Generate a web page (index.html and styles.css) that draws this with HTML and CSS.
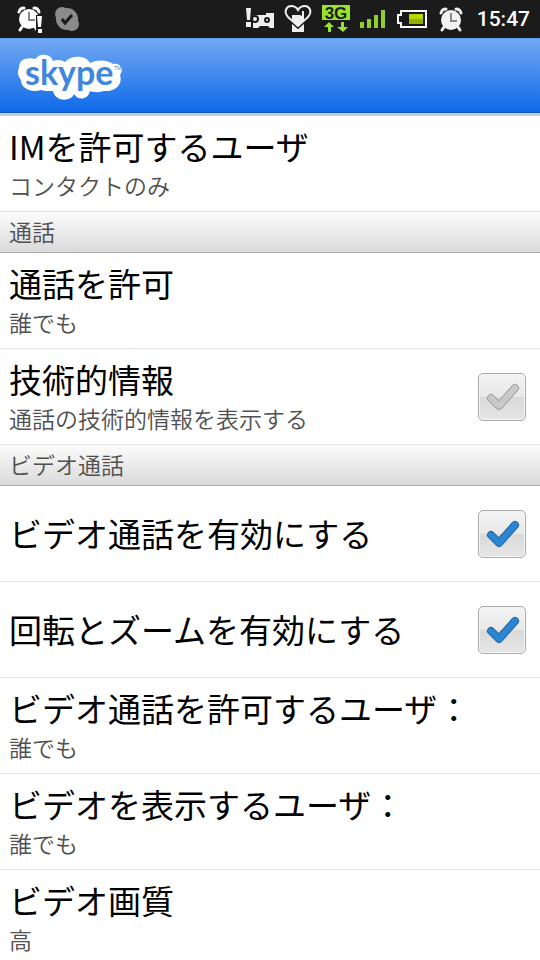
FILE: index.html
```html
<!DOCTYPE html>
<html lang="ja">
<head>
<meta charset="utf-8">
<meta name="viewport" content="width=device-width, initial-scale=1">
<title>Skype</title>
<link rel="stylesheet" href="styles.css">
</head>
<body>
<div class="status">
  <svg class="icon" width="26" height="28" viewBox="0 0 26 28" aria-hidden="true">
    <g fill="none" stroke="#fff" stroke-width="3" stroke-linecap="round"><path d="M2 7Q3 3 7 3M17 3Q21 3 22 7M5 22l-2 3M18 22l2 3"/></g>
    <circle cx="12" cy="14" r="10" fill="#fff"/>
    <path d="M12 7v8h6" fill="none" stroke="#888" stroke-width="2"/>
    <path d="M19 10h7v18h-7z" fill="#1b1b1b"/>
    <path d="M20 11h5l-1 11h-3zM21 24h4v4h-4z" fill="#fff"/>
  </svg>
  <svg class="icon" width="26" height="26" viewBox="0 0 26 26" aria-hidden="true">
    <g fill="#8b8b8b"><circle cx="14" cy="13" r="11"/><circle cx="9" cy="8" r="7"/><circle cx="19" cy="18" r="7"/></g>
    <path d="M9 13l3 4 7-8" fill="none" stroke="#1b1b1b" stroke-width="3"/>
  </svg>
  <span class="spacer"></span>
  <svg class="icon" width="28" height="24" viewBox="0 0 28 24" aria-hidden="true">
    <path d="M0 1h5l-1 12H1zM0 15h5v5H0z" fill="#eee"/>
    <path d="M7 8h13V6h8v15h-4l-2-2h-8l-2 2H7z" fill="#eee"/>
    <circle cx="9" cy="12" r="3" fill="#eee" stroke="#1b1b1b" stroke-width="2"/>
    <circle cx="21" cy="13" r="2" fill="#eee" stroke="#1b1b1b" stroke-width="2"/>
  </svg>
  <svg class="icon" width="28" height="28" viewBox="0 0 28 28" aria-hidden="true">
    <path d="M8 17h12v10H8z" fill="#eee"/>
    <path d="M14 21L4 12C-1 6 3 1 7 1q5 0 7 4 2-4 7-4c4 0 8 5 3 11z" fill="#1b1b1b" stroke="#1b1b1b" stroke-width="5"/>
    <path d="M14 21L4 12C-1 6 3 1 7 1q5 0 7 4 2-4 7-4c4 0 8 5 3 11z" fill="none" stroke="#eee" stroke-width="2"/>
    <path d="M8 10h8l2 1V6h2v9l-6 6-6-6z" fill="#eee"/>
  </svg>
  <svg class="icon" width="28" height="28" viewBox="0 0 28 28" role="img" aria-label="3G">
    <path d="M0 0h28v15H0z" fill="#9be22d"/>
    <text x="14" y="14" text-anchor="middle" class="net">3G</text>
    <path d="M7 17l5 5H9v5H6v-5H2zM19 17h3v5h4l-5 5-6-5h4z" fill="#9be22d"/>
  </svg>
  <svg class="icon" width="26" height="20" viewBox="0 0 26 20" aria-hidden="true">
    <path d="M0 13h4v6H0zM7 10h4v9H7zM14 6h4v13h-4zM21 1h4v18h-4z" fill="#8fcf27"/>
  </svg>
  <svg class="icon" width="32" height="20" viewBox="0 0 32 20" aria-hidden="true">
    <path d="M5 2h25v16H5v-4H2V6h3z" fill="none" stroke="#fff" stroke-width="2"/>
    <path d="M13 5h14v5H13z" fill="#b4d900"/><path d="M13 10h14v5H13z" fill="#8fb000"/>
  </svg>
  <svg class="icon" width="26" height="26" viewBox="0 0 26 26" aria-hidden="true">
    <g fill="none" stroke="#eee" stroke-width="3" stroke-linecap="round"><path d="M3 7Q4 3 8 3M18 3Q22 3 23 7M6 21l-2 3M20 21l2 3"/></g>
    <circle cx="13" cy="14" r="10" fill="#f2f2f2"/>
    <path d="M13 7v8h6" fill="none" stroke="#888" stroke-width="2"/>
  </svg>
  <time class="clock">15:47</time>
</div>

<header class="header">
  <svg class="logo" width="108" height="56" viewBox="0 0 108 56" role="img" aria-label="skype">
    <path fill="#fff" d="M2 19C2 10 10 8 19 10C21 4 34 4 36 12C41 10 45 11 48 13C54 6 69 6 73 14C81 10 91 11 96 15C104 13 107 21 103 26C106 35 99 43 87 42C80 44 76 43 73 42C71 51 61 52 57 45C54 53 38 53 36 42C30 42 27 42 24 41C13 44 4 39 4 31C1 27 0 23 2 19Z"/>
    <text x="8" y="36" class="wordmark">skype</text>
    <text x="97" y="21" class="tm">TM</text>
  </svg>
</header>

<main>
  <section>
    <div class="row"><div class="text"><span class="title">IMを許可するユーザ</span><span class="sub">コンタクトのみ</span></div></div>
  </section>
  <section>
    <h2 class="group">通話</h2>
    <div class="row"><div class="text"><span class="title">通話を許可</span><span class="sub">誰でも</span></div></div>
    <label class="row">
      <span class="text"><span class="title">技術的情報</span><span class="sub">通話の技術的情報を表示する</span></span>
      <span class="check"><input type="checkbox"><svg viewBox="0 0 48 48" aria-hidden="true"><path class="edge" d="M13 25l8 8 16-18"/><path class="tick" d="M13 25l8 8 16-18"/></svg></span>
    </label>
  </section>
  <section>
    <h2 class="group">ビデオ通話</h2>
    <label class="row">
      <span class="text"><span class="title">ビデオ通話を有効にする</span></span>
      <span class="check"><input type="checkbox" checked><svg viewBox="0 0 48 48" aria-hidden="true"><path class="edge" d="M13 25l8 8 16-18"/><path class="tick" d="M13 25l8 8 16-18"/></svg></span>
    </label>
    <label class="row">
      <span class="text"><span class="title">回転とズームを有効にする</span></span>
      <span class="check"><input type="checkbox" checked><svg viewBox="0 0 48 48" aria-hidden="true"><path class="edge" d="M13 25l8 8 16-18"/><path class="tick" d="M13 25l8 8 16-18"/></svg></span>
    </label>
    <div class="row"><div class="text"><span class="title">ビデオ通話を許可するユーザ：</span><span class="sub">誰でも</span></div></div>
    <div class="row"><div class="text"><span class="title">ビデオを表示するユーザ：</span><span class="sub">誰でも</span></div></div>
    <div class="row"><div class="text"><span class="title">ビデオ画質</span><span class="sub">高</span></div></div>
  </section>
</main>
</body>
</html>
```
FILE: styles.css
```css
* { box-sizing: border-box; }

body {
  margin: 0;
  height: 100vh;
  overflow: hidden;
  background: #fff;
  color: #000;
  font-family: "Noto Sans CJK JP", sans-serif;
}

.status {
  display: flex;
  align-items: center;
  gap: 10px;
  height: 38px;
  padding: 0 10px 0 17px;
  background: #1b1b1b;
}

.icon {
  flex: none;
  overflow: visible;
}

.spacer { flex: 1; }

.net {
  font: bold 17px "Liberation Sans", sans-serif;
  fill: #1b1b1b;
}

.clock {
  margin-left: 3px;
  color: #fff;
  font: 500 21px/38px Roboto, sans-serif;
}

.header {
  display: flex;
  align-items: center;
  height: 78px;
  padding: 2px 0 0 17px;
  background: linear-gradient(#72a8f2, #0d69e9);
  border-top: 1px solid #5b9bf5;
  border-bottom: 3px solid #c5cfe4;
  box-shadow: inset 0 -1px #1556b5;
}

.logo { overflow: visible; }

.wordmark {
  font: bold 34px Lato, sans-serif;
  fill: #3f86dc;
}

.tm {
  font: 5px "Liberation Sans", sans-serif;
  fill: #3f86dc;
}

.group {
  margin: 0;
  height: 41px;
  padding-left: 9px;
  font-size: 23px;
  font-weight: 350;
  line-height: 38px;
  color: #505050;
  background: linear-gradient(#fcfcfc, #dadada);
  border-bottom: 1px solid #aaa;
}

.row {
  display: flex;
  align-items: center;
  gap: 12px;
  min-height: 96px;
  padding: 0 14px 0 9px;
  border-bottom: 1px solid #e2e2e2;
}

.text {
  flex: 1;
  min-width: 0;
  padding-bottom: 2px;
}

.title, .sub {
  display: block;
  white-space: nowrap;
}

.title {
  font-size: 33px;
  font-weight: 400;
  line-height: 44px;
}

.sub {
  font-size: 23px;
  font-weight: 350;
  line-height: 34px;
  color: #505050;
}

.check {
  display: grid;
  flex: none;
  width: 48px;
  height: 48px;
}

.check > * { grid-area: 1 / 1; }

.check input {
  appearance: none;
  width: 48px;
  height: 48px;
  margin: 0;
  border: 1px solid #aaa;
  border-radius: 5px;
  background: linear-gradient(#f3f3f3, #e8e8e8 50%, #d9d9d9 50%, #e6e6e6);
  box-shadow: inset 0 0 0 1px #f4f4f4;
}

.check svg {
  pointer-events: none;
  fill: none;
  stroke-linecap: round;
  stroke-linejoin: round;
}

.edge {
  stroke: #a2a2a2;
  stroke-width: 8;
}

.tick {
  stroke: #c9c9c9;
  stroke-width: 6;
}

.check input:checked + svg .edge { stroke: #1c66ac; }
.check input:checked + svg .tick { stroke: #2c86d2; }
```
